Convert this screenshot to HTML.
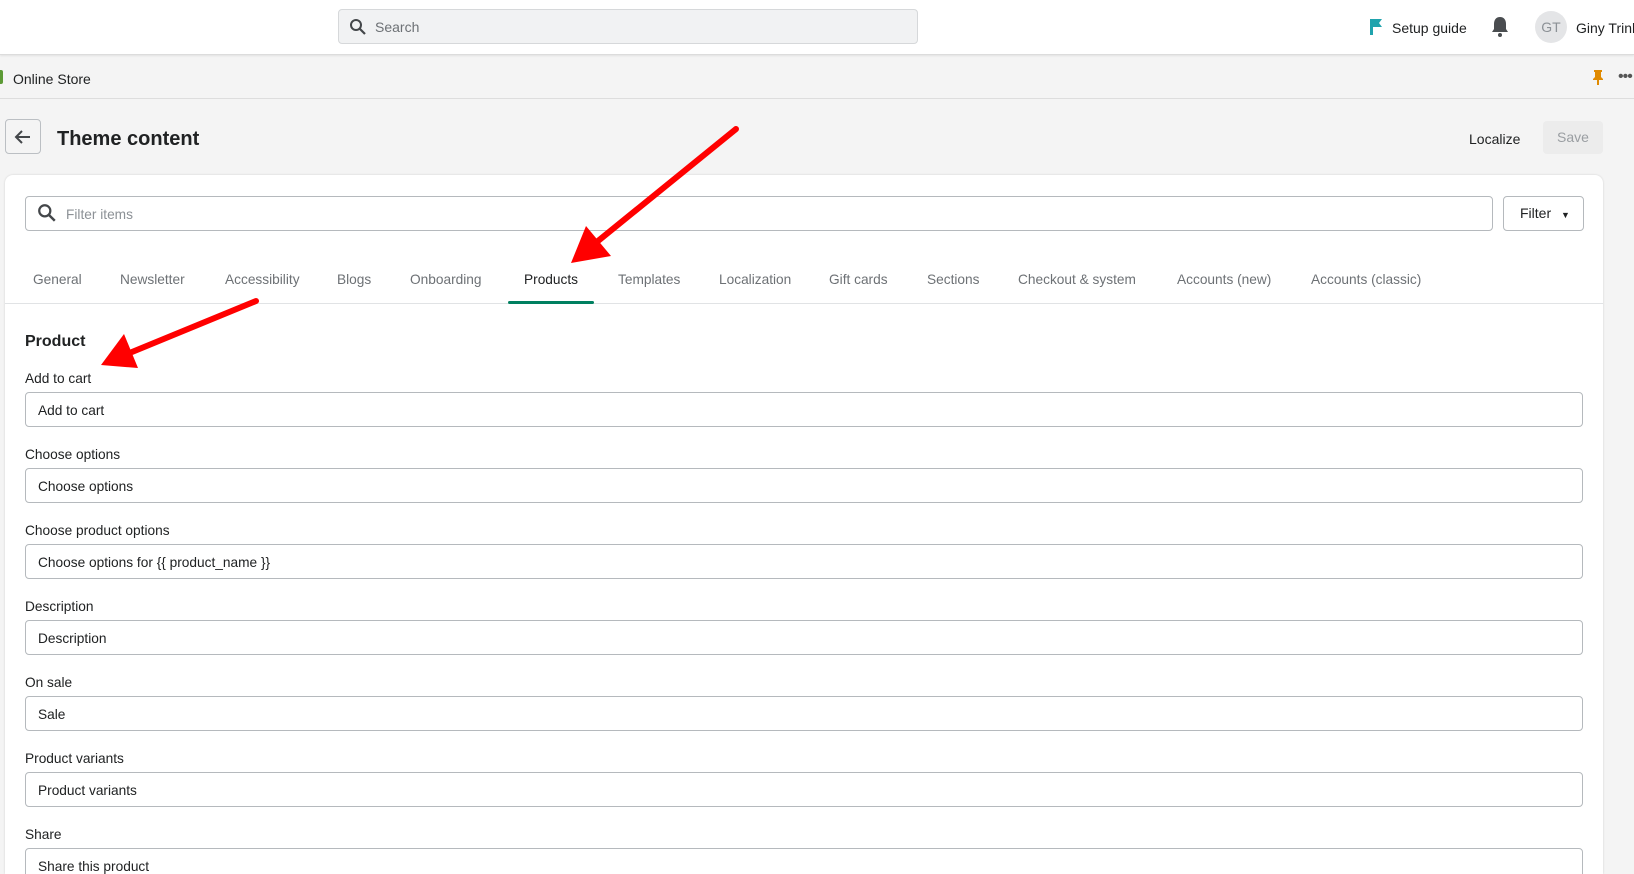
<!DOCTYPE html>
<html style="width:1634px;height:874px;overflow:hidden"><head><meta charset="utf-8"><style>
*{box-sizing:border-box;margin:0;padding:0}
body{width:1634px;height:874px;overflow:hidden;background:#f4f4f4;font-family:"Liberation Sans",sans-serif;color:#202223;font-size:14px;position:relative}
.abs{position:absolute}
.top{left:0;top:0;width:1634px;height:55px;background:#fff;border-bottom:1px solid #dcdcdc;box-shadow:0 1px 2px rgba(0,0,0,.08)}
.search{left:338px;top:9px;width:580px;height:35px;background:#f1f2f3;border:1px solid #d6d8da;border-radius:4px}
.store{top:55px;left:0;width:1634px;height:44px;border-bottom:1px solid #ddd}
.card{left:5px;top:175px;width:1598px;height:699px;background:#fff;border-radius:8px 8px 0 0;box-shadow:0 0 2px rgba(0,0,0,.15)}
.inp{left:25px;width:1558px;height:35px;border:1px solid #b5b9bd;border-radius:4px;background:#fff;padding-left:12px;line-height:35px;font-size:13.7px}
.lbl{left:25px;font-size:13.7px}
.tab{top:272px;font-size:13.7px;color:#6d7175}
</style></head><body>
<div class="abs top"></div>
<div class="abs search"><svg class="abs" style="left:10px;top:8px" width="18" height="18" viewBox="0 0 18 18"><circle cx="7" cy="7" r="5" fill="none" stroke="#44474a" stroke-width="2"/><path d="M11 11l5 5" stroke="#44474a" stroke-width="2.2"/></svg><span class="abs" style="left:36px;top:9px;color:#6d7175">Search</span></div>
<svg class="abs" style="left:1368px;top:18px" width="16" height="18" viewBox="0 0 16 18"><path d="M2 1h12l-3 4 3 4H5v8H2z" fill="#1fa3ad"/></svg>
<span class="abs" style="left:1392px;top:20px;font-size:14px">Setup guide</span>
<svg class="abs" style="left:1491px;top:16px" width="18" height="22" viewBox="0 0 18 22"><path d="M9 1c-4 0-6 3-6 7v5l-2 3h16l-2-3V8c0-4-2-7-6-7z" fill="#4a4d50"/><circle cx="9" cy="19" r="2" fill="#4a4d50"/></svg>
<div class="abs" style="left:1535px;top:11px;width:32px;height:32px;border-radius:50%;background:#e4e5e7;color:#8c9196;font-size:14px;text-align:center;line-height:32px">GT</div>
<span class="abs" style="left:1576px;top:20px;white-space:nowrap">Giny Trinh</span>
<div class="abs store"></div>
<div class="abs" style="left:-2px;top:70px;width:5px;height:14px;background:#5c9a35;border-radius:2px"></div>
<span class="abs" style="left:13px;top:71px">Online Store</span>
<svg class="abs" style="left:1592px;top:69px" width="12" height="16" viewBox="0 0 12 16"><path d="M2 1h8v2H9v5l2 2v1H1v-1l2-2V3H2z M5 11h2v5H5z" fill="#e08a00"/></svg>
<span class="abs" style="left:1618px;top:68px;font-size:16px;color:#555;letter-spacing:-1px">•••</span>
<div class="abs" style="left:5px;top:119px;width:36px;height:35px;border:1px solid #bbbfc3;border-radius:4px;background:#f4f4f4"><svg class="abs" style="left:8px;top:8px" width="18" height="18" viewBox="0 0 18 18"><path d="M16 9H3M8 3L2 9l6 6" fill="none" stroke="#44474a" stroke-width="2"/></svg></div>
<span class="abs" style="left:57px;top:128px;font-size:20px;font-weight:bold">Theme content</span>
<span class="abs" style="left:1469px;top:131px">Localize</span>
<div class="abs" style="left:1543px;top:121px;width:60px;height:33px;background:#ececec;border-radius:4px;color:#9a9ea2;text-align:center;line-height:33px">Save</div>
<div class="abs card"></div>
<div class="abs inp" style="top:196px;width:1468px;padding-left:40px;color:#8c9196">Filter items</div>
<svg class="abs" style="left:37px;top:203px" width="20" height="20" viewBox="0 0 18 18"><circle cx="7" cy="7" r="5" fill="none" stroke="#44474a" stroke-width="2"/><path d="M11 11l5 5" stroke="#44474a" stroke-width="2.2"/></svg>
<div class="abs" style="left:1503px;top:196px;width:81px;height:35px;border:1px solid #b5b9bd;border-radius:4px;line-height:33px;padding-left:16px">Filter <span style="font-size:9px;margin-left:6px">▼</span></div>
<span class="abs tab" style="left:33px">General</span>
<span class="abs tab" style="left:120px">Newsletter</span>
<span class="abs tab" style="left:225px">Accessibility</span>
<span class="abs tab" style="left:337px">Blogs</span>
<span class="abs tab" style="left:410px">Onboarding</span>
<span class="abs tab" style="left:524px;color:#202223">Products</span>
<span class="abs tab" style="left:618px">Templates</span>
<span class="abs tab" style="left:719px">Localization</span>
<span class="abs tab" style="left:829px">Gift cards</span>
<span class="abs tab" style="left:927px">Sections</span>
<span class="abs tab" style="left:1018px">Checkout &amp; system</span>
<span class="abs tab" style="left:1177px">Accounts (new)</span>
<span class="abs tab" style="left:1311px">Accounts (classic)</span>
<div class="abs" style="left:5px;top:303px;width:1598px;height:1px;background:#e1e3e5"></div>
<div class="abs" style="left:508px;top:301px;width:86px;height:3px;background:#008060;border-radius:2px"></div>
<span class="abs" style="left:25px;top:333px;font-size:16px;font-weight:bold">Product</span>
<span class="abs lbl" style="top:371px">Add to cart</span><div class="abs inp" style="top:392px">Add to cart</div>
<span class="abs lbl" style="top:447px">Choose options</span><div class="abs inp" style="top:468px">Choose options</div>
<span class="abs lbl" style="top:523px">Choose product options</span><div class="abs inp" style="top:544px">Choose options for {{ product_name }}</div>
<span class="abs lbl" style="top:599px">Description</span><div class="abs inp" style="top:620px">Description</div>
<span class="abs lbl" style="top:675px">On sale</span><div class="abs inp" style="top:696px">Sale</div>
<span class="abs lbl" style="top:751px">Product variants</span><div class="abs inp" style="top:772px">Product variants</div>
<span class="abs lbl" style="top:827px">Share</span><div class="abs inp" style="top:848px">Share this product</div>
<svg class="abs" style="left:0;top:0" width="1634" height="874">
<line x1="736" y1="129" x2="598" y2="241" stroke="#f00" stroke-width="6" stroke-linecap="round"/>
<polygon points="571,263 586,226 611,256" fill="#f00"/>
<line x1="256" y1="301" x2="132" y2="352" stroke="#f00" stroke-width="6" stroke-linecap="round"/>
<polygon points="101,365 124,334 138,368" fill="#f00"/>
</svg>
</body></html>
